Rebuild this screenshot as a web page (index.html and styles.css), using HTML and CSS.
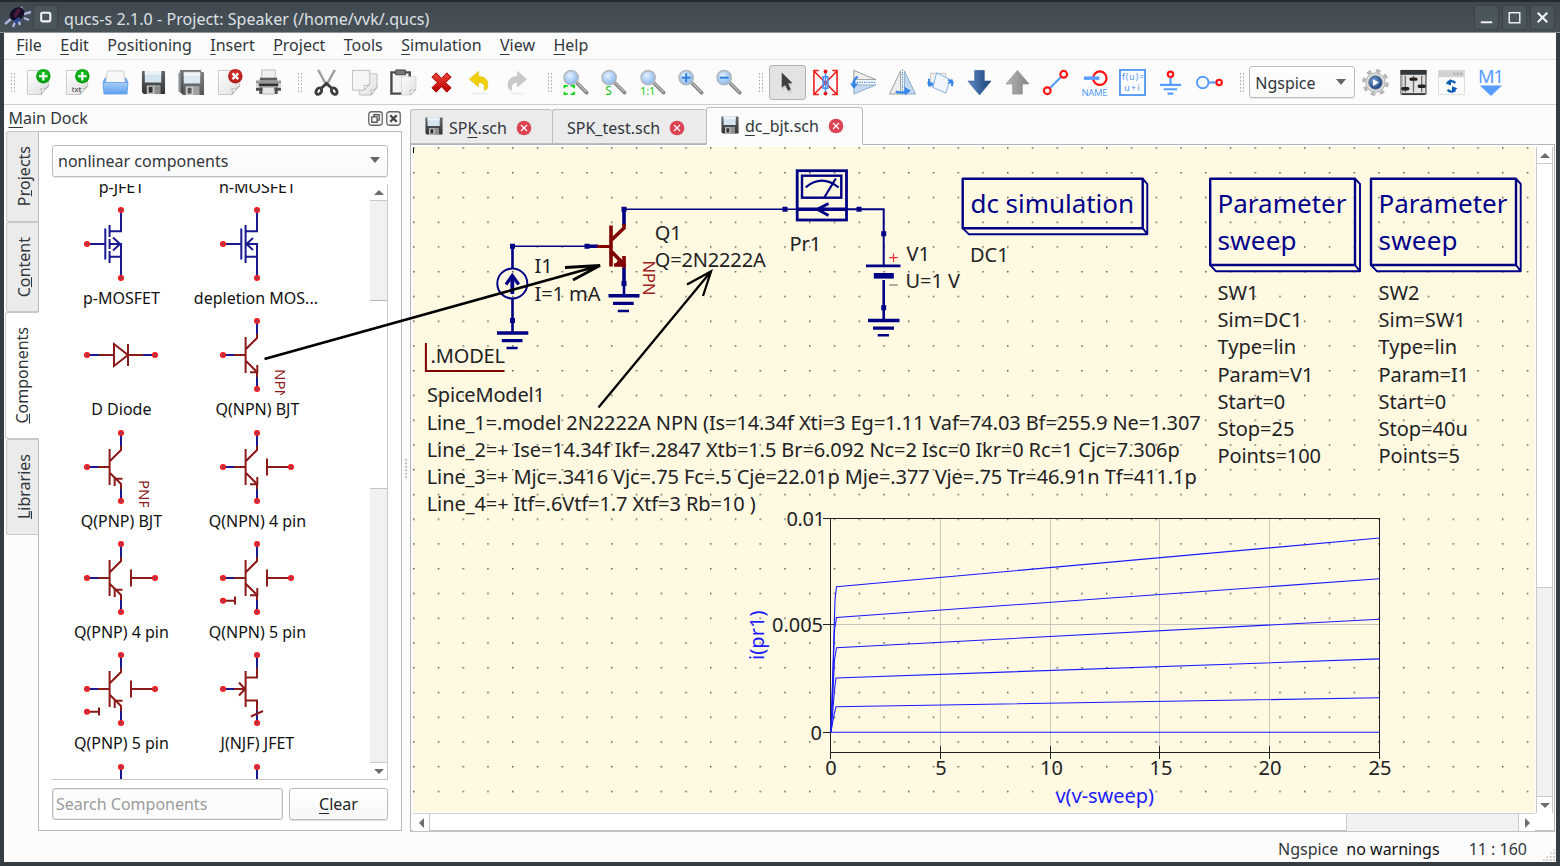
FILE: index.html
```html
<!DOCTYPE html>
<html lang="en">
<head>
<meta charset="utf-8">
<title>qucs-s 2.1.0 - Project: Speaker (/home/vvk/.qucs)</title>
<link rel="stylesheet" href="styles.css">
</head>
<body>
<svg class="defs" width="0" height="0" aria-hidden="true">
  <defs>
    <linearGradient id="paper" x1="0" y1="0" x2="1" y2="1"><stop offset="0" stop-color="#fff"/><stop offset="1" stop-color="#dcdcdc"/></linearGradient>
    <linearGradient id="blueFolder" x1="0" y1="0" x2="0" y2="1"><stop offset="0" stop-color="#a9ccf8"/><stop offset="1" stop-color="#5b9ff0"/></linearGradient>
    <linearGradient id="floppyG" x1="0" y1="0" x2="0" y2="1"><stop offset="0" stop-color="#66696b"/><stop offset="1" stop-color="#303234"/></linearGradient>
    <linearGradient id="redX" x1="0" y1="0" x2="0" y2="1"><stop offset="0" stop-color="#ee4438"/><stop offset="1" stop-color="#b80000"/></linearGradient>
    <linearGradient id="downG" x1="0" y1="0" x2="1" y2="0"><stop offset="0" stop-color="#5e8fc8"/><stop offset="1" stop-color="#173f75"/></linearGradient>
    <linearGradient id="upG" x1="0" y1="0" x2="1" y2="0"><stop offset="0" stop-color="#b4b4b4"/><stop offset="1" stop-color="#858585"/></linearGradient>
    <radialGradient id="lensG" cx=".4" cy=".35" r=".7"><stop offset="0" stop-color="#e6f1fe"/><stop offset="1" stop-color="#7fb2ef"/></radialGradient>
    <radialGradient id="greenG" cx=".5" cy=".4" r=".6"><stop offset="0" stop-color="#22cf2c"/><stop offset="1" stop-color="#009407"/></radialGradient>
    <radialGradient id="redG" cx=".5" cy=".4" r=".6"><stop offset="0" stop-color="#e2413a"/><stop offset="1" stop-color="#a91410"/></radialGradient>
    <radialGradient id="playG" cx=".4" cy=".4" r=".6"><stop offset="0" stop-color="#7fa7dc"/><stop offset="1" stop-color="#1c3f7d"/></radialGradient>
    <symbol id="page" viewBox="0 0 28 28"><path d="M2.500 1.500h22v16l-8 9h-14z" fill="url(#paper)" stroke="#c9c9c9"/><path d="M16.500 26.500c1.500-2 .5-4.500-.5-6 3 1 6 0 8.500-3z" fill="#fff" stroke="#aaa" stroke-width=".9"/></symbol>
    <symbol id="floppy" viewBox="0 0 28 28"><path d="M2 2h23a1 1 0 0 1 1 1v23H4l-2-2z" fill="url(#floppyG)"/><path d="M5 2h17v12H5z" fill="#d4e4ef"/><path d="M5 2h17v4H5z" fill="#ebf3f8"/><path d="M7 17h14v9H7z" fill="#bfc0c0"/><path d="M9 18.500h4v6H9z" fill="#333"/><path d="M15 17h6v9h-6z" fill="#8d8f8f"/></symbol>
    <symbol id="lens" viewBox="0 0 28 28"><path d="M16 15l9.500 9.500" stroke="#858585" stroke-width="3.800" stroke-linecap="round"/><path d="M16 14.500l9.500 9.500" stroke="#b9b9b9" stroke-width="1.500"/><circle cx="9.500" cy="9" r="7.300" fill="url(#lensG)" stroke="#b3bac1" stroke-width="1.700"/></symbol>
    <symbol id="tabx" viewBox="0 0 16 16"><circle cx="8" cy="8" r="7.300" fill="#da4453"/><path d="M5 5l6 6M11 5l-6 6" stroke="#fff" stroke-width="1.200"/></symbol>

    <g id="term"><circle r="2.300" fill="#a33a5a" stroke="#fb1a1a" stroke-width="1.500"/></g>
    <g id="bjt" fill="none" stroke-width="2">
      <path d="M0-34V-21M0 22V34M-34 0H-23" stroke="#1a1a90"/>
      <path d="M-23 0H-11.400M-11.400-18V18M-11-6L0-17V-21M-11 6L0 17V22" stroke="#8b1a1a"/>
      <use href="#term" y="-34"/><use href="#term" y="34"/><use href="#term" x="-34"/>
    </g>
    <path id="npnTip" d="M.3 10V17.300H-7" fill="none" stroke="#8b1a1a" stroke-width="2"/>
    <path id="pnpTip" d="M1.500 11.700H-6.300V19" fill="none" stroke="#8b1a1a" stroke-width="2"/>
    <g id="substrate"><path d="M10-8.500V8.500M10 0H34" fill="none" stroke="#8b1a1a" stroke-width="2"/><use href="#term" x="34"/></g>
    <g id="thermal"><path d="M-22 18.500V26.500M-34 22.700H-22" fill="none" stroke="#8b1a1a" stroke-width="2"/><use href="#term" x="-34" y="22.700"/></g>
    <g id="mos"><path d="M0-34V-12.800H-11M0 34V0H-11M0 12.800H-11M-15.700-15.500V15.500M-34 0H-15.700" fill="none" stroke="#1a1a90" stroke-width="2"/><use href="#term" y="-34"/><use href="#term" y="34"/><use href="#term" x="-34"/></g>
  </defs>
</svg>

<div class="window">
  <header class="titlebar">
    <svg class="app-logo" viewBox="0 0 28 26"><path d="M1 21l6-5M9 24l3-7M16 22l-2-6M17 4l2 4M27 9l-7 2M20 15l5 2" stroke="#a9b5dd" stroke-width="2.400"/><ellipse cx="13" cy="11" rx="8" ry="6" transform="rotate(-35 13 11)" fill="#140f26"/><path d="M9 13l5-8 3 2-5 8z" fill="#4b1838"/><path d="M9 18l6-4 2 3-5 4z" fill="#2c4b93"/></svg>
    <span class="title-button"><svg viewBox="0 0 24 24"><rect x="7.500" y="7" width="9.500" height="9" rx="1.500" fill="none" stroke="#f1f3f4" stroke-width="2.200"/></svg></span>
    <h1 class="title">qucs-s 2.1.0 - Project: Speaker (/home/vvk/.qucs)</h1>
    <div class="title-actions">
      <span class="title-button"><svg viewBox="0 0 24 24"><path d="M6 17h12" stroke="#f1f3f4" stroke-width="2"/></svg></span>
      <span class="title-button"><svg viewBox="0 0 24 24"><rect x="6.500" y="7" width="11" height="10.500" fill="none" stroke="#f1f3f4" stroke-width="1.500"/></svg></span>
      <span class="title-button"><svg viewBox="0 0 24 24"><path d="M7 7l10 10M17 7L7 17" stroke="#f1f3f4" stroke-width="2.200"/></svg></span>
    </div>
  </header>

  <nav class="menubar">
    <span><u>F</u>ile</span><span><u>E</u>dit</span><span>P<u>o</u>sitioning</span><span><u>I</u>nsert</span><span><u>P</u>roject</span><span><u>T</u>ools</span><span><u>S</u>imulation</span><span><u>V</u>iew</span><span><u>H</u>elp</span>
  </nav>

  <div class="toolbar">
    <span class="handle first"></span>
    <span class="tool"><svg viewBox="0 0 28 28"><use href="#page"/><circle cx="19" cy="7.500" r="7.500" fill="url(#greenG)"/><path d="M19 3v9M14.500 7.500h9" stroke="#fff" stroke-width="2.200"/></svg></span>
    <span class="tool"><svg viewBox="0 0 28 28"><use href="#page"/><text x="8" y="23.500" font-size="8" fill="#444">txt</text><circle cx="19" cy="7.500" r="7.500" fill="url(#greenG)"/><path d="M19 3v9M14.500 7.500h9" stroke="#fff" stroke-width="2.200"/></svg></span>
    <span class="tool"><svg viewBox="0 0 28 28"><path d="M3 9h22l2 4v8H1v-8z" fill="#6ba5ee"/><path d="M5.500 2h17l1.500 12H4z" fill="#f8f8f8" stroke="#c6c6c6" stroke-width=".8"/><path d="M1 14h26l-1 12H2z" fill="url(#blueFolder)" stroke="#65a2ea" stroke-width=".8"/></svg></span>
    <span class="tool"><svg viewBox="0 0 28 28"><use href="#floppy"/></svg></span>
    <span class="tool"><svg viewBox="0 0 28 28"><path d="M2 1h22v3H2z" fill="#777"/><path d="M.5 4h5v21h-3l-2-2z" fill="#8b8e90"/><use href="#floppy" x="1" y="1" opacity=".82"/></svg></span>
    <span class="tool"><svg viewBox="0 0 28 28"><use href="#page" x="-1"/><circle cx="19" cy="7.500" r="7.500" fill="url(#redG)"/><path d="M16 4.500l6 6M22 4.500l-6 6" stroke="#fff" stroke-width="2.400"/></svg></span>
    <span class="tool"><svg viewBox="0 0 28 28"><path d="M7 1h14v12H7z" fill="#f0f0f0" stroke="#bdbdbd"/><path d="M5 9h18v4H5z" fill="#5b5f62"/><path d="M1 12h26v7H1z" fill="#d8d8d8"/><path d="M1 12h26v3H1z" fill="#999"/><path d="M4 15h20v3H4z" fill="#333"/><path d="M1 21h26M6 19v7M22 19v7" stroke="#4b4d4f" stroke-width="3"/><path d="M8 19h12v7H8z" fill="#e7e7e7" stroke="#999" stroke-width=".7"/></svg></span>
    <span class="handle"></span>
    <span class="tool"><svg viewBox="0 0 28 28"><path d="M5.500 1l9 16.500M22.500 1l-9 16.500" stroke="#b6b6b6" stroke-width="2.800"/><path d="M5 1l9 16M23 1l-9 16" stroke="#777" stroke-width=".7"/><g fill="none" stroke="#3c3e3f" stroke-width="3"><ellipse cx="6" cy="23" rx="2.600" ry="3.600" transform="rotate(35 6 23)"/><ellipse cx="22" cy="23" rx="2.600" ry="3.600" transform="rotate(-35 22 23)"/><path d="M8.500 20l5.500-5 5.500 5"/></g></svg></span>
    <span class="tool"><svg viewBox="0 0 28 28"><path d="M9 5h18v14l-6 8H9z" fill="url(#paper)" stroke="#bcbcbc"/><path d="M1.500 1.500h18v14l-6 6.500h-12z" fill="#f5f5f5" stroke="#bdbdbd"/><path d="M13.500 22c1-2 .5-4-.5-5 3 .5 4.500 0 6.500-1.500zM21 27c1-2 .5-4-.5-5 3 .5 4.500-1 6.500-3z" fill="#fff" stroke="#aaa" stroke-width=".8"/></svg></span>
    <span class="tool"><svg viewBox="0 0 28 28"><path d="M2.500 3.500h19v22h-19z" fill="#f4f4f4" stroke="#4c4c4c" stroke-width="2.500"/><path d="M7 1h10v5H7z" fill="#777" stroke="#444"/><path d="M13 8h15v13l-5 6H13z" fill="url(#paper)" stroke="#ccc" stroke-width=".7"/><path d="M22 27c1-2 .5-4-.5-5 3 .5 4.500 0 6.500-1z" fill="#fff" stroke="#aaa" stroke-width=".7"/></svg></span>
    <span class="tool"><svg viewBox="0 0 28 28"><path d="M8.500 4L14 9.800 19.500 4l4.500 4.500-5.800 5.500L24 19.500 19.500 24 14 18.300 8.500 24 4 19.500 9.800 14 4 8.500z" fill="url(#redX)" stroke="#a00000"/></svg></span>
    <span class="tool"><svg viewBox="0 0 28 28"><ellipse cx="14" cy="25.500" rx="9" ry="1.500" fill="#eee"/><path d="M3.500 10.500L13 2.500v5.300c8 0 11 5 9 12.500-1 1-1.700 1.500-3 2 1-5.500-1-8.300-6-8.300v4.500z" fill="#f0cf05" stroke="#d9b900" stroke-width=".6"/></svg></span>
    <span class="tool"><svg viewBox="0 0 28 28"><ellipse cx="14" cy="25.500" rx="9" ry="1.500" fill="#f1f1f1"/><path d="M23.500 10.500L14 2.500v5.300c-8 0-11 5-9 12.500 1 1 1.700 1.500 3 2-1-5.500 1-8.300 6-8.300v4.500z" fill="#c9c9c9" stroke="#bbb" stroke-width=".6"/></svg></span>
    <span class="handle h3"></span>
    <span class="tool t3"><svg viewBox="0 0 28 28"><use href="#lens"/><path d="M2.500 20v-2.500H6M9 17.500h3.500V20M12.500 23.500V26H9M6 26H2.500v-2.500" fill="none" stroke="#12d312" stroke-width="1.800"/></svg></span>
    <span class="tool t3"><svg viewBox="0 0 28 28"><use href="#lens"/><text x="5.500" y="26.500" font-size="12.500" fill="#12c912">S</text></svg></span>
    <span class="tool t3"><svg viewBox="0 0 28 28"><use href="#lens"/><text x="1" y="26.500" font-size="11.500" fill="#12c912" textLength="16">1:1</text></svg></span>
    <span class="tool t3"><svg viewBox="0 0 28 28"><use href="#lens"/><path d="M9.500 4.500v9M5 9h9" stroke="#2b7ddb" stroke-width="2"/></svg></span>
    <span class="tool t3"><svg viewBox="0 0 28 28"><use href="#lens"/><path d="M5 9h9" stroke="#2b7ddb" stroke-width="2"/></svg></span>
    <span class="handle h4"></span>
    <span class="tool t4 pressed"><svg viewBox="0 0 28 28"><path d="M9 5l11 11.500-4 .8 3 6.200-3.500 2-3-6.500L9 22z" fill="#cfcfcf"/><path d="M8 3.500l11 11-4.500.5 3 6-3 1.500-3-6-3.500 3z" fill="#3f3f3f"/></svg></span>
    <span class="tool t4"><svg viewBox="0 0 28 28"><g fill="none"><path d="M7 1.500H2v25h5M21 1.500h5v25h-5M2 2l24 24.500M26 2L2 26.500" stroke="#f01818" stroke-width="1.600"/><path d="M14 3v22M11.500 8h5v12h-5z" stroke="#4b92f5" stroke-width="1.700"/></g><circle cx="14" cy="2.500" r="2" fill="#e11"/><circle cx="14" cy="25.500" r="2" fill="#e11"/></svg></span>
    <span class="tool t4"><svg viewBox="0 0 28 28"><path d="M4 1.500l23 9.500H4z" fill="#eee" stroke="#999"/><path d="M4 26l23-9.500H4z" fill="#c3d9f1" stroke="#8facc9"/><path d="M2 13.800h25" stroke="#4c8cdd" stroke-width="1.200" stroke-dasharray="1.500 1"/><path d="M8 8c-4 2-4.500 5-4 9" fill="none" stroke="#3485e8" stroke-width="2.500"/><path d="M0 15h8.500l-4.500 5.500z" fill="#3485e8"/></svg></span>
    <span class="tool t4"><svg viewBox="0 0 28 28"><path d="M12 2v24H.5z" fill="#eee" stroke="#999"/><path d="M16 2v24h11.500z" fill="#c3d9f1" stroke="#8facc9"/><path d="M14 .5v27" stroke="#4c8cdd" stroke-width="1.200" stroke-dasharray="1.500 1"/><path d="M7 23.500c4 1.500 7 1.500 11 0" fill="none" stroke="#3485e8" stroke-width="2.500"/><path d="M16 18.500l6.500 4-6 5z" fill="#3485e8"/></svg></span>
    <span class="tool t4"><svg viewBox="0 0 28 28"><path d="M3.500 4.500h16v14h-16z" fill="#f1f1f1" stroke="#c4c4c4"/><path d="M10 4l14 7-4.500 14L6 19z" fill="#f2f7fd" stroke="#7fade6"/><path d="M2 10v4l4 3M26 18v-4l-4-3" fill="none" stroke="#3485e8" stroke-width="2"/><path d="M0 14h7l-5 5zM28 15h-7l5-5z" fill="#3485e8"/></svg></span>
    <span class="tool t4"><svg viewBox="0 0 28 28"><path d="M9 1.500h10v11h7L14 27 2 12.500h7z" fill="url(#downG)" stroke="#345f92" stroke-width=".7"/></svg></span>
    <span class="tool t4"><svg viewBox="0 0 28 28"><path d="M9 26h10V15.500h7L14 1.500 2 15.500h7z" fill="url(#upG)" stroke="#8a8a8a" stroke-width=".7"/></svg></span>
    <span class="tool t4"><svg viewBox="0 0 28 28"><path d="M6 22L22 6" stroke="#579cff" stroke-width="2.200"/><circle cx="22.500" cy="5.500" r="3.500" fill="#fff" stroke="#f11" stroke-width="2.200"/><circle cx="5.500" cy="22.500" r="3.500" fill="#fff" stroke="#f11" stroke-width="2.200"/></svg></span>
    <span class="tool t4"><svg viewBox="0 0 28 28"><circle cx="19.500" cy="9.500" r="7" fill="none" stroke="#f11" stroke-width="2.200"/><path d="M3 9.500h16" stroke="#579cff" stroke-width="3.500"/><text x=".5" y="27.500" font-size="9.800" fill="#579cff" textLength="27">NAME</text></svg></span>
    <span class="tool t4"><svg viewBox="0 0 28 28"><rect x="1" y="1" width="26" height="26" fill="#fff" stroke="#5a9cf8" stroke-width="2"/><text x="3" y="11.500" font-size="9" fill="#4e91ee" textLength="23">f(u)=</text><text x="5.500" y="22.500" font-size="9" fill="#4e91ee" textLength="16">u+i</text></svg></span>
    <span class="tool t4"><svg viewBox="0 0 28 28"><path d="M14 9v8M3 16.500h22M7 21h14M11 25.500h6" stroke="#579cff" stroke-width="2.200"/><circle cx="14" cy="5.500" r="2.800" fill="#fff" stroke="#f11" stroke-width="2.200"/></svg></span>
    <span class="tool t4"><svg viewBox="0 0 28 28"><path d="M12 14h10" stroke="#579cff" stroke-width="2.200"/><circle cx="7" cy="14" r="6" fill="#fff" stroke="#579cff" stroke-width="2"/><circle cx="24" cy="14" r="2.800" fill="#fff" stroke="#f11" stroke-width="2.200"/></svg></span>
    <span class="handle h5"></span>
    <span class="combo engine">Ngspice<i class="caret"></i></span>
    <span class="tool t5"><svg viewBox="0 0 28 28"><circle cx="14" cy="14" r="12.200" fill="none" stroke="#b5b5b5" stroke-width="3.200" stroke-dasharray="4.800 4.780"/><circle cx="14" cy="14" r="10" fill="#dedede" stroke="#aaa"/><circle cx="14" cy="14" r="7" fill="url(#playG)" stroke="#6a7a90"/><path d="M11.500 10.500l6 3.500-6 3.500z" fill="#fff"/></svg></span>
    <span class="tool t5"><svg viewBox="0 0 28 28"><path d="M.5 1.500h27v25H.5z" fill="#e2e2e2" stroke="#9a9a9a"/><path d="M.5 1h27v5H.5z" fill="#32373b"/><path d="M2 26h24" stroke="#3a3a3a" stroke-width="2"/><path d="M5.500 7v17M14 7v17M22.500 7v17" stroke="#666" stroke-width="1.300"/><path d="M2 6v20M26.500 6v20" stroke="#777"/><path d="M3 20.500h5M11.500 10.500h5M20 18h5" stroke="#222" stroke-width="3.600" stroke-linecap="round"/></svg></span>
    <span class="tool t5"><svg viewBox="0 0 28 28"><path d="M.5 1.500h27v25H.5z" fill="#fcfcfc" stroke="#dedede"/><path d="M.5 1.500h27v7H.5z" fill="#d2d2d2"/><path d="M16 5h9" stroke="#aaa" stroke-width="2" stroke-dasharray="2 1.500"/><path d="M10 14c2-2 6-2 8 .5M18 22c-2 2-6 2-8-.5" fill="none" stroke="#0a5cb8" stroke-width="2.500"/><path d="M8 15l5.500-5v7zM20 20l-5.500 5v-7z" fill="#0a5cb8"/></svg></span>
    <span class="tool t5"><svg viewBox="0 0 28 28"><text x="1" y="14" font-size="19" fill="#579cff" textLength="27">M1</text><path d="M3 17h23L14.500 28z" fill="#579cff"/></svg></span>
  </div>

  <main class="workspace">
    <aside class="dock">
      <div class="dock-title"><span><u>M</u>ain Dock</span>
        <span class="dock-buttons">
          <svg viewBox="0 0 14 14"><rect x=".7" y=".7" width="12.600" height="12.600" rx="2.500" fill="#f7f7f7" stroke="#666" stroke-width="1.200"/><path d="M5.500 5V3.500h5v5H9M3.500 5.500h5v5h-5z" fill="none" stroke="#555" stroke-width="1.200"/></svg>
          <svg viewBox="0 0 14 14"><rect x=".7" y=".7" width="12.600" height="12.600" rx="2.500" fill="#f7f7f7" stroke="#666" stroke-width="1.200"/><path d="M4 4l6 6M10 4l-6 6" stroke="#444" stroke-width="2.200"/></svg>
        </span>
      </div>
      <div class="dock-body">
        <div class="side-tabs">
          <span class="side-tab projects"><b>P<u>r</u>ojects</b></span>
          <span class="side-tab content"><b>C<u>o</u>ntent</b></span>
          <span class="side-tab components active"><b><u>C</u>omponents</b></span>
          <span class="side-tab libraries"><b><u>L</u>ibraries</b></span>
        </div>
        <section class="dock-pane">
          <div class="combo category">nonlinear components<i class="caret"></i></div>
          <div class="list-box">
            <div class="parts">
              <div class="part"><svg viewBox="-40 -40 80 80"></svg><span>p-JFET</span></div>
              <div class="part"><svg viewBox="-40 -40 80 80"></svg><span>n-MOSFET</span></div>
              <div class="part"><svg viewBox="-40 -40 80 80"><use href="#mos"/><path d="M-11.400-19V-7M-11.400-5V5M-11.400 7V19M-8-6.500L-1 0-8 6.500" fill="none" stroke="#1a1a90" stroke-width="2"/></svg><span>p-MOSFET</span></div>
              <div class="part"><svg viewBox="-40 -40 80 80"><use href="#mos"/><path d="M-11.400-19V19M-4-6L-10.500 0-4 6" fill="none" stroke="#1a1a90" stroke-width="2"/></svg><span class="elided">depletion MOS...</span></div>
              <div class="part"><svg viewBox="-40 -40 80 80"><path d="M-34 0H-22M22 0H34" stroke="#1a1a90" stroke-width="2"/><path d="M-22 0H-7M7 0H22M-7-11V11L7 0ZM7-11V11" fill="none" stroke="#8b1a1a" stroke-width="2"/><use href="#term" x="-34"/><use href="#term" x="34"/></svg><span>D Diode</span></div>
              <div class="part"><svg viewBox="-40 -40 80 80"><use href="#bjt"/><use href="#npnTip"/><text transform="translate(18 14) rotate(90)" font-size="15" fill="#8b1a1a">NPN</text></svg><span>Q(NPN) BJT</span></div>
              <div class="part"><svg viewBox="-40 -40 80 80"><use href="#bjt"/><use href="#pnpTip"/><text transform="translate(18 13) rotate(90)" font-size="15" fill="#8b1a1a">PNP</text></svg><span>Q(PNP) BJT</span></div>
              <div class="part"><svg viewBox="-40 -40 80 80"><use href="#bjt"/><use href="#npnTip"/><use href="#substrate"/></svg><span>Q(NPN) 4 pin</span></div>
              <div class="part"><svg viewBox="-40 -40 80 80"><use href="#bjt"/><use href="#pnpTip"/><use href="#substrate"/></svg><span>Q(PNP) 4 pin</span></div>
              <div class="part"><svg viewBox="-40 -40 80 80"><use href="#bjt"/><use href="#npnTip"/><use href="#substrate"/><use href="#thermal"/></svg><span>Q(NPN) 5 pin</span></div>
              <div class="part"><svg viewBox="-40 -40 80 80"><use href="#bjt"/><use href="#pnpTip"/><use href="#substrate"/><use href="#thermal"/></svg><span>Q(PNP) 5 pin</span></div>
              <div class="part"><svg viewBox="-40 -40 80 80"><path d="M0-34V-21M0 22V34M-34 0H-23" stroke="#1a1a90" stroke-width="2"/><path d="M-23 0H-12M-18-6.500L-12 0-18 6.500M-11.400-18V18M-11.400-11.500H0V-21M-11.400 11.500H0V22M-6 27.500L6 22" fill="none" stroke="#8b1a1a" stroke-width="2"/><use href="#term" y="-34"/><use href="#term" y="34"/><use href="#term" x="-34"/></svg><span>J(NJF) JFET</span></div>
              <div class="part"><svg viewBox="-40 -40 80 80"><use href="#bjt"/></svg></div>
              <div class="part"><svg viewBox="-40 -40 80 80"><use href="#bjt"/></svg></div>
            </div>
            <div class="scroll-v">
              <i class="scroll-btn up"></i><i class="v-trough before"></i><i class="v-thumb"></i><i class="v-trough after"></i><i class="scroll-btn down"></i>
            </div>
          </div>
          <div class="search-row">
            <div class="search">Search Components</div>
            <div class="clear"><span><u>C</u>lear</span></div>
          </div>
        </section>
      </div>
    </aside>

    <div class="splitter"><i></i></div>

    <section class="documents">
      <div class="doc-tabs">
        <span class="doc-tab one"><svg class="tab-disk"><use href="#floppy"/></svg><b>SP<u>K</u>.sch</b><svg class="tab-close"><use href="#tabx"/></svg></span>
        <span class="doc-tab two"><b>SPK_test.sch</b><svg class="tab-close"><use href="#tabx"/></svg></span>
        <span class="doc-tab three active"><svg class="tab-disk"><use href="#floppy"/></svg><b><u>d</u>c_bjt.sch</b><svg class="tab-close"><use href="#tabx"/></svg></span>
      </div>
      <div class="view">
        <svg class="canvas" viewBox="413 147 1122 665" width="1122" height="665">
          <defs>
            <pattern id="grid" x="413" y="147.200" width="24.750" height="24.750" patternUnits="userSpaceOnUse"><rect x=".2" y=".2" width="1.200" height="1.200" fill="#000"/></pattern>
          </defs>
          <rect x="413" y="147" width="1122" height="665" fill="#fff9e2"/>
          <rect x="413" y="147" width="1122" height="652" fill="url(#grid)"/>
          <path d="M413.500 148v5" stroke="#000"/>

          <!-- wires and symbols -->
          <g fill="none" stroke="#000084">
            <path d="M512.500 246.200H588M624 209.300H797" stroke-width="1.600"/>
            <path d="M846 209.300H883.700V266" stroke-width="2"/>
            <path d="M512.500 246V268M512.500 298V332M624 284V295M883.700 280V320" stroke-width="2.600"/>
            <path d="M624 207V226M624 268V285M587 246.300H598" stroke-width="3.600"/>
            <circle cx="512.300" cy="283.500" r="15" stroke-width="2"/>
            <path d="M512.300 294V276" stroke-width="3.800"/>
            <path d="M506 284.500L512.300 275.500 518.700 284.500" stroke-width="3.200"/>
            <path d="M497 333H528.300M608.500 295.800H639.500M868 320.500H899.500" stroke-width="3.600"/>
            <path d="M501.800 340.700H522.500M613 303.400H633.700M873 328.200H894" stroke-width="3.200"/>
            <path d="M506.500 348H517.700M617.800 311H629M877.700 335.300H889" stroke-width="2.600"/>
            <path d="M866 265.900H900.500" stroke-width="2.600"/>
            <path d="M873.800 275.800H893.800" stroke-width="5.600"/>
            <rect x="797.200" y="170.700" width="49.300" height="49.300" stroke-width="2.800"/>
            <rect x="802" y="175.700" width="39.300" height="22" stroke-width="2.400"/>
            <path d="M805.700 187.300Q822 174 838.700 187.500M824 198L835.800 178.500" stroke-width="2.200"/>
            <path d="M797 209.300H846" stroke-width="3.400"/>
            <path d="M828.500 203.500L817.500 209.300 828.500 215.500" stroke-width="3"/>
          </g>
          <g fill="#000084">
            <path d="M510 243.700h5v5h-5zM510 318h5v5h-5zM584.500 243.700h5v5h-5zM621.500 206.800h5v5h-5zM621.500 281h5v5h-5zM782.500 206.800h5v5h-5zM856.500 206.800h5v5h-5zM881.200 231.200h5v5h-5zM881.200 305.300h5v5h-5z"/>
          </g>
          <g fill="none" stroke="#800000">
            <path d="M611 225.500V266.500M612 239.500L624 228V224M612 252L624 264.500M624 256V268M614 265H626" stroke-width="3.600"/>
            <path d="M597 246.500H610" stroke-width="3"/>
            <path d="M620 258L616 264H624z" fill="#800000" stroke-width="1"/>
            <path d="M425.900 343V371H504.500" stroke-width="2"/>
          </g>
          <path d="M893.500 253.500v8.500M889.300 257.700h8.500" stroke="#f03030" stroke-width="1.200"/>
          <path d="M889.300 285h8.500" stroke="#777" stroke-width="1.200"/>

          <!-- simulation blocks -->
          <g fill="none" stroke="#000084" stroke-linejoin="round">
            <path d="M962.700 178.700H1142.700V228.200H962.700ZM1210.200 178.700H1355V265H1210.200ZM1371 178.700H1516V265H1371Z" stroke-width="2.400"/>
            <path d="M962.700 228.200L968.700 234.200H1147.300V184.200L1142.700 178.700M1142.700 228.200L1147.300 234.200M1210.200 265L1216 271.300H1360V184L1355 178.700M1355 265L1360 271.300M1371 265L1377 271.300H1520.700V184L1516 178.700M1516 265L1520.700 271.300" stroke-width="1.900"/>
          </g>
          <g class="block-name">
            <text x="970.500" y="212.700" textLength="163.500">dc simulation</text>
            <text x="1217.500" y="212.700" textLength="129">Parameter</text><text x="1217.500" y="250" textLength="79">sweep</text>
            <text x="1378.500" y="212.700" textLength="129">Parameter</text><text x="1378.500" y="250" textLength="79">sweep</text>
          </g>

          <g class="label">
            <text x="654.700" y="239.500">Q1</text><text x="654.700" y="267" textLength="111">Q=2N2222A</text>
            <text x="534.500" y="273">I1</text><text x="534.500" y="300.500" textLength="66">I=1 mA</text>
            <text x="789.500" y="250.500">Pr1</text>
            <text x="906.500" y="260.500">V1</text><text x="905.500" y="288" textLength="54.500">U=1 V</text>
            <text x="970" y="262">DC1</text>
            <text x="430.500" y="362.500" textLength="74.500">.MODEL</text>
            <text x="427" y="402.300" textLength="118">SpiceModel1</text>
            <text x="426.700" y="429.500" textLength="774">Line_1=.model 2N2222A NPN (Is=14.34f Xti=3 Eg=1.11 Vaf=74.03 Bf=255.9 Ne=1.307</text>
            <text x="426.700" y="457" textLength="753">Line_2=+ Ise=14.34f Ikf=.2847 Xtb=1.5 Br=6.092 Nc=2 Isc=0 Ikr=0 Rc=1 Cjc=7.306p</text>
            <text x="426.700" y="483.700" textLength="770">Line_3=+ Mjc=.3416 Vjc=.75 Fc=.5 Cje=22.01p Mje=.377 Vje=.75 Tr=46.91n Tf=411.1p</text>
            <text x="426.700" y="511" textLength="329">Line_4=+ Itf=.6Vtf=1.7 Xtf=3 Rb=10 )</text>
            <text x="1217.500" y="299.500">SW1</text><text x="1217.500" y="326.500">Sim=DC1</text><text x="1217.500" y="354">Type=lin</text><text x="1217.500" y="381.500">Param=V1</text><text x="1217.500" y="408.500">Start=0</text><text x="1217.500" y="435.800">Stop=25</text><text x="1217.500" y="462.500" textLength="103.500">Points=100</text>
            <text x="1378.500" y="299.500">SW2</text><text x="1378.500" y="326.500">Sim=SW1</text><text x="1378.500" y="354">Type=lin</text><text x="1378.500" y="381.500">Param=I1</text><text x="1378.500" y="408.500">Start=0</text><text x="1378.500" y="435.800">Stop=40u</text><text x="1378.500" y="462.500">Points=5</text>
          </g>
          <text class="kind" transform="translate(643 260.500) rotate(90)" textLength="35">NPN</text>

          <!-- sweep diagram -->
          <g fill="none" shape-rendering="crispEdges">
            <path d="M940.500 519V752M1050.500 519V752M1159.500 519V752M1269.500 519V752M831 624.500H1379" stroke="#c6c4bd"/>
            <path d="M830.500 518.500H1379.500V752.500H830.500ZM823 518.500H830M823 624.500H834M823 732.500H830M830.500 746V759M940.500 746V759M1050.500 746V759M1159.500 746V759M1269.500 746V759M1379.500 746V759" stroke="#222"/>
          </g>
          <g fill="none" stroke="#1a1aff" stroke-width="1.100">
            <path d="M831 732.300H1379.500"/>
            <path d="M831 732L834 715 836 706.700 1379.500 697.800"/>
            <path d="M831 732L834.500 690 836 678 1379.500 658.900"/>
            <path d="M831 732L834.500 660 836.500 647.700 1379.500 619.300"/>
            <path d="M831 732L834.500 630 836.500 617.500 1379.500 578.800"/>
            <path d="M831 732L835 600 836.500 586.800 1379.500 538"/>
          </g>
          <g class="label">
            <text x="786.500" y="526" textLength="38.500">0.01</text><text x="772" y="632" textLength="51">0.005</text><text x="822" y="740" text-anchor="end">0</text>
            <text x="831" y="774.700" text-anchor="middle">0</text><text x="941" y="774.700" text-anchor="middle">5</text><text x="1051.500" y="774.700" text-anchor="middle">10</text><text x="1161" y="774.700" text-anchor="middle">15</text><text x="1270" y="774.700" text-anchor="middle">20</text><text x="1380" y="774.700" text-anchor="middle">25</text>
          </g>
          <g class="label axis">
            <text x="1055.500" y="802.500" textLength="98.500">v(v-sweep)</text>
            <text transform="translate(764 660) rotate(-90)" textLength="49.500">i(pr1)</text>
          </g>
          <path d="M598.500 407.500L711 271.500M687 284.500L711 271.500 703 296" fill="none" stroke="#000" stroke-width="2.300"/>
        </svg>
        <div class="view-scroll-v"><i class="scroll-btn up"></i><i class="thumb"></i><i class="trough"></i><i class="scroll-btn down"></i></div>
        <div class="view-scroll-h"><i class="scroll-btn left"></i><i class="thumb"></i><i class="trough"></i><i class="scroll-btn right"></i></div>
      </div>
    </section>
  </main>

  <footer class="statusbar">
    <span>Ngspice</span><span class="warn">no warnings</span><span class="pos">11 : 160</span><i class="grip"></i>
  </footer>
</div>

<svg class="pointer" viewBox="0 0 350 110"><path d="M4.500 104L340 10.500M305 12.500L340 10.500 313 25" fill="none" stroke="#000" stroke-width="2.800"/></svg>
</body>
</html>
```
FILE: styles.css
```css
* { box-sizing: border-box; }
body {
  margin: 0;
  font: 16px "Noto Sans", "Open Sans", sans-serif;
  color: #31363b;
  background: #31373c;
  overflow: hidden;
}
u { text-decoration: underline; text-decoration-thickness: 1px; text-underline-offset: 3px; text-decoration-skip-ink: none; }
b { font-weight: 400; }
i { display: block; }
svg text { font-family: "Noto Sans", "Open Sans", sans-serif; }
.defs { position: absolute; }

.window {
  height: 866px;
  display: flex;
  flex-direction: column;
  background: #fcfcfc;
  border: solid #353c42;
  border-width: 0 4px 4px;
}

.titlebar {
  height: 33px;
  flex: none;
  margin: 0 -4px;
  padding: 0 4px;
  display: flex;
  align-items: center;
  background: linear-gradient(#414850, #475158);
  border-top: 2px solid #262b2f;
  border-bottom: 1px solid #8e9497;
}
.app-logo { width: 28px; height: 26px; margin: 0 1px 2px 0; }
.title-button {
  width: 25px;
  height: 25px;
  border: 1px solid #3b4248;
  border-radius: 3px;
  background: #4b555c;
}
.title-button svg { width: 23px; height: 23px; display: block; }
.title { margin: 3px 0 0 6px; font-size: 16px; font-weight: 400; line-height: 22px; letter-spacing: .06px; color: #dde1e4; flex: 1; }
.title-actions { display: flex; gap: 3px; margin-right: 1px; }

.menubar {
  height: 27px;
  flex: none;
  display: flex;
  padding-left: 3px;
  border-bottom: 1px solid #e2e2e2;
  line-height: 25px;
}
.menubar span { padding: 0 9.220px; }

.toolbar {
  height: 45px;
  flex: none;
  display: flex;
  align-items: center;
  border-bottom: 1px solid #cdcdcd;
}
.tool { flex: none; width: 38.300px; height: 35px; display: flex; align-items: center; justify-content: center; }
.tool svg { width: 27px; height: 27px; overflow: visible; }
.t3 { width: 38.200px; }
.t4 { width: 38.350px; }
.pressed { width: 37px; margin: 0 .7px; background: #e3e3e3; border: 1px solid #b3b3b3; border-radius: 3px; }
.handle {
  flex: none;
  width: 6px;
  height: 21px;
  margin: 0 4px 0 9.400px;
  background: radial-gradient(circle, #b0b0b0 .8px, transparent 1.1px) 0 0 / 3px 3.500px;
}
.handle.first { margin: 0 4px 0 5.600px; }
.handle.h3 { margin-left: 9.800px; }
.handle.h4 { margin-left: 10.500px; }
.handle.h5 { margin-left: 11px; }

.combo {
  display: flex;
  align-items: center;
  justify-content: space-between;
  border: 1px solid #bcbcbc;
  border-radius: 3px;
  background: linear-gradient(#fefefe, #f9f9f9);
  box-shadow: 0 1px 0 #e6e6e6;
}
.engine { width: 106px; height: 32px; padding: 2px 8px 0 5px; margin-right: 1px; }
.caret { width: 0; height: 0; border: 5px solid transparent; border-top: 6px solid #666; border-bottom: 0; margin-top: -2px; }

.workspace { flex: 1; min-height: 0; display: flex; }
.dock { width: 398px; display: flex; flex-direction: column; }
.dock-title { height: 26px; flex: none; display: flex; justify-content: space-between; line-height: 27px; padding: 0 1px 0 4.500px; }
.dock-buttons { display: flex; gap: 3px; padding-top: 6px; }
.dock-buttons svg { width: 15px; height: 15px; }
.dock-body { height: 700px; display: flex; }

.side-tabs { width: 35px; flex: none; padding-left: 2px; margin-right: -1px; position: relative; }
.side-tab {
  display: flex;
  align-items: center;
  justify-content: center;
  border: 1px solid #c8c8c8;
  border-right-color: #bdbdbd;
  border-radius: 3px 0 0 3px;
  background: #ebebeb;
}
.side-tab b { writing-mode: vertical-rl; transform: rotate(180deg); line-height: 22px; margin-left: 3px; }
.side-tab u { text-decoration: none; background: linear-gradient(#31363b, #31363b) 3px 0 / 1px 100% no-repeat; }
.projects { height: 91px; }
.content { height: 90px; }
.components { height: 127px; }
.libraries { height: 96px; }
.side-tab.active { background: #fff; margin-left: -1.500px; border-right-color: #fff; }
.side-tab.active b { margin-left: 1px; }

.dock-pane {
  flex: 1;
  border: 1px solid #bababa;
  background: #fff;
  display: flex;
  flex-direction: column;
  padding: 13px 13px 10px;
}
.category { height: 32px; flex: none; padding: 0 7px 0 5px; }
.list-box { height: 598px; margin-top: 7px; display: flex; border-bottom: 1px solid #c4c4c4; overflow: hidden; }
.parts {
  flex: 1;
  display: grid;
  grid-template-columns: 136px 136px;
  grid-auto-rows: 111.330px;
  margin: -91.300px 0 0 1.400px;
  color: #111;
}
.part { display: flex; flex-direction: column; align-items: center; white-space: nowrap; }
.part svg { width: 80px; height: 80px; flex: none; }
.part span { margin-top: 3px; line-height: 22px; }
.part .elided { margin-left: -3px; }

.scroll-v { width: 18px; display: flex; flex-direction: column; border-right: 1px solid #c9c9c9; }
.scroll-btn { height: 17px; flex: none; display: flex; align-items: center; justify-content: center; background: #fff; }
.scroll-btn::before { content: ""; border: 5px solid transparent; }
.scroll-btn.up { border-bottom: 1px solid #c9c9c9; }
.scroll-btn.up::before { border-top: 0; border-bottom-color: #6d6d6d; }
.scroll-btn.down { border-top: 1px solid #c9c9c9; }
.scroll-btn.down::before { border-bottom: 0; border-top-color: #6d6d6d; }
.scroll-btn.left::before { border-left: 0; border-right-color: #6d6d6d; }
.scroll-btn.right::before { border-right: 0; border-left-color: #6d6d6d; }
.v-trough { background: #f1f1f1; }
.v-trough.before { height: 100px; border-bottom: 1px solid #b8b8b8; }
.v-thumb { height: 187px; background: #fff; }
.v-trough.after { flex: 1; border-top: 1px solid #c6c6c6; }

.search-row { display: flex; gap: 6px; margin-top: 8px; height: 32px; }
.search, .clear { border: 1px solid #b9b9b9; border-radius: 3px; line-height: 31px; }
.search { width: 231px; padding-left: 3px; color: #9b9b9b; background: #fcfcfc; box-shadow: inset 0 0 0 1px #ececec; }
.clear { flex: 1; text-align: center; background: linear-gradient(#fff, #f7f7f7); box-shadow: 0 1px 0 #e0e0e0; color: #222; }

.splitter { width: 8px; flex: none; display: flex; align-items: center; justify-content: center; }
.splitter i { width: 2px; height: 21px; background: radial-gradient(circle, #bbb .8px, transparent 1px) 0 0 / 2px 3.500px; }

.documents { flex: 1; display: flex; flex-direction: column; }
.doc-tabs { height: 39px; flex: none; display: flex; align-items: flex-end; }
.doc-tab {
  height: 35px;
  padding-top: 2px;
  display: flex;
  align-items: center;
  border: 1px solid #bcbcbc;
  border-right-width: 0;
  border-radius: 3px 3px 0 0;
  background: #ebebeb;
}
.one { width: 142px; padding-left: 14px; }
.two { width: 154px; padding-left: 14px; }
.three { width: 157px; padding-left: 14px; padding-top: 0; }
.doc-tab.active { height: 38px; background: #fcfcfc; border-right-width: 1px; border-bottom-color: #fcfcfc; position: relative; z-index: 1; margin-bottom: -1px; }
.tab-disk { width: 20px; height: 20px; margin: -3px 5px 0 -1px; }
.tab-close { width: 16px; height: 16px; margin-left: 9px; }

.view {
  height: 688px;
  display: grid;
  grid-template: 666px 18px / 1123px 17px;
  padding: 2px 0 0 2px;
  border: 1px solid #b5b5b5;
  border-bottom: 2px solid #c3c3c3;
  margin-right: 1px;
  background: #fff;
}
.canvas { display: block; }
.label { font-size: 20px; fill: #222; }
.label.axis { fill: #1c1cff; }
.block-name { font-size: 26px; fill: #00008b; }
.kind { font-size: 16.500px; fill: #a02020; }
.view-scroll-v { display: flex; flex-direction: column; border: solid #c9c9c9; border-width: 0 1px; }
.view-scroll-v .thumb { height: 423px; }
.view-scroll-v .trough { flex: 1; background: #f1f1f1; border-top: 1px solid #c9c9c9; }
.view-scroll-v .up { height: 17px; }
.view-scroll-h { display: flex; border-top: 1px solid #cfcfcf; margin-right: 1px; }
.view-scroll-h .scroll-btn { width: 17px; height: 17px; }
.view-scroll-h .left { border-right: 1px solid #c9c9c9; }
.view-scroll-h .right { border-left: 1px solid #c9c9c9; }
.view-scroll-h .thumb { flex: 1; }
.view-scroll-h .trough { width: 172px; background: #f1f1f1; border-left: 1px solid #c9c9c9; }

.statusbar { height: 31px; flex: none; display: flex; justify-content: flex-end; line-height: 37px; }
.warn { margin-left: 8px; color: #111; }
.pos { margin-left: 29px; }
.grip { width: 14px; height: 13px; margin: 17px 0 0 15px; background: radial-gradient(circle, #bbb .8px, transparent 1px) 0 0 / 3.500px 3.500px; clip-path: polygon(100% 0, 100% 100%, 0 100%); }

.pointer { position: absolute; left: 260px; top: 255px; width: 350px; height: 110px; pointer-events: none; }
```
